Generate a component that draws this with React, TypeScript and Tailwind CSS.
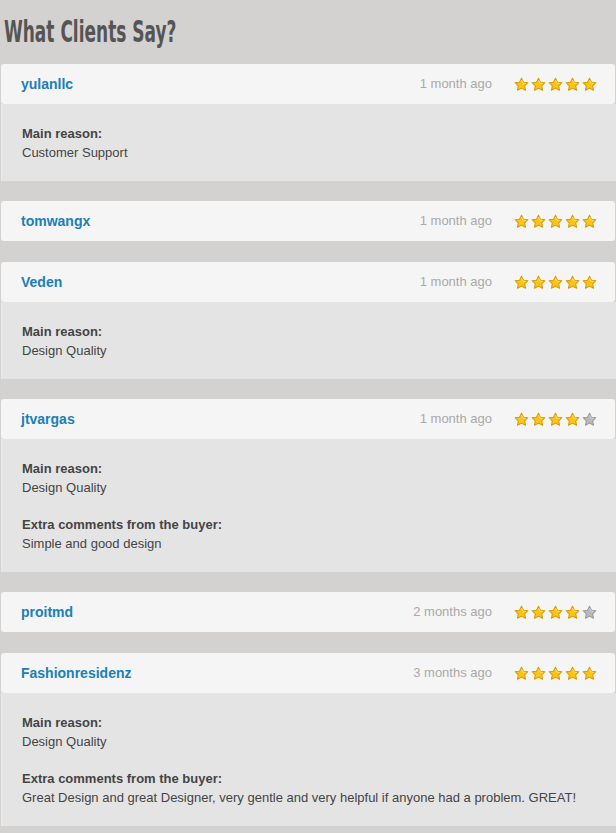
const reviews = [
  { user: "yulanllc", when: "1 month ago", stars: 5, reason: "Customer Support" },
  { user: "tomwangx", when: "1 month ago", stars: 5 },
  { user: "Veden", when: "1 month ago", stars: 5, reason: "Design Quality" },
  {
    user: "jtvargas",
    when: "1 month ago",
    stars: 4,
    reason: "Design Quality",
    comment: "Simple and good design",
  },
  { user: "proitmd", when: "2 months ago", stars: 4 },
  {
    user: "Fashionresidenz",
    when: "3 months ago",
    stars: 5,
    reason: "Design Quality",
    comment:
      "Great Design and great Designer, very gentle and very helpful if anyone had a problem. GREAT!",
  },
];

function Star({ on }: { on: boolean }) {
  return (
    <svg width="15" height="15" viewBox="0 0 16 16">
      <path
        d="M8 1.2 L10.1 5.5 L14.8 6.1 L11.4 9.4 L12.3 14.2 L8 11.9 L3.7 14.2 L4.6 9.4 L1.2 6.1 L5.9 5.5 Z"
        fill={on ? "#fcc419" : "#b9b9b9"}
        stroke={on ? "#d89b00" : "#9a9a9a"}
        strokeWidth="1.1"
        strokeLinejoin="round"
      />
      <path
        d="M8 3.2 L9.5 6.4 L12.6 6.9"
        fill="none"
        stroke={on ? "#ffe27a" : "#d6d6d6"}
        strokeWidth="0.9"
      />
    </svg>
  );
}

export default function App() {
  return (
    <div className="min-h-[833px] bg-[#d3d2d0] font-['Liberation_Sans',Arial,sans-serif]">
      {/* condensed heading: no Oswald offline, so squeeze DejaVu Condensed */}
      <h1 className="h-[64px] pl-[4px] pt-[14px] text-[30px] leading-[36px] font-bold text-[#555555] font-['DejaVu_Sans_Condensed',sans-serif]">
        <span className="inline-block origin-left scale-x-[0.63] whitespace-nowrap">What Clients Say?</span>
      </h1>

      <div className="flex flex-col gap-5 pl-px">
        {reviews.map((r) => (
          <div key={r.user} className={r.reason ? "" : "mb-px"}>
            <div className="mr-px flex h-10 items-center rounded-[3px] bg-[#f5f5f5] pl-5 pr-[18px]">
              <span className="text-[14px] font-bold text-[#1b80b6]">{r.user}</span>
              <span className="ml-auto text-[13px] text-[#a9a9a9]">{r.when}</span>
              <div className="ml-[22px] flex gap-[2px]">
                {[0, 1, 2, 3, 4].map((i) => (
                  <Star key={i} on={i < r.stars} />
                ))}
              </div>
            </div>

            {r.reason && (
              <div className="border-l border-[#ebebeb] bg-[#e4e4e4] pb-[19px] pl-5 pt-5 text-[13px] leading-[19px] text-[#444444]">
                <p className="font-bold">Main reason:</p>
                <p>{r.reason}</p>
                {r.comment && (
                  <>
                    <p className="mt-[18px] font-bold">Extra comments from the buyer:</p>
                    <p>{r.comment}</p>
                  </>
                )}
              </div>
            )}
          </div>
        ))}
      </div>
    </div>
  );
}
